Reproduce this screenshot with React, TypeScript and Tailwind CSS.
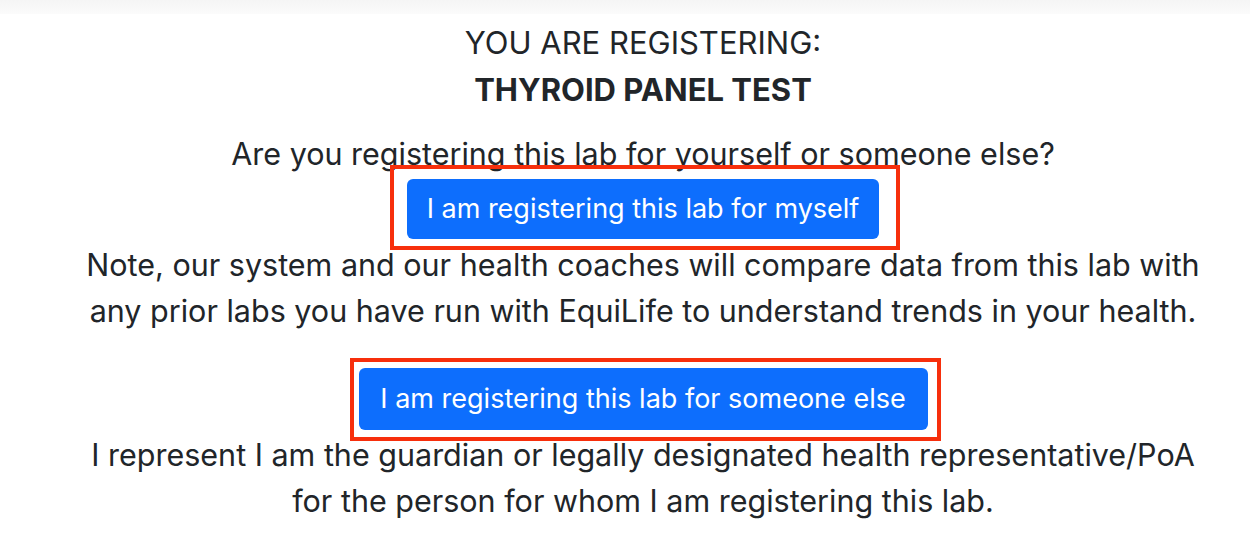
import React from "react";

export default function App() {
  return (
    <div
      className="min-h-[556px] w-full bg-white text-[#212529]"
      style={{ fontFamily: "Inter, 'Noto Sans', sans-serif" }}
    >
      <div className="h-[14px] w-full bg-gradient-to-b from-[#f5f5f5] to-[#fbfbfb]" />
      <div className="flex flex-col items-center pl-[36px] text-center">
        <div className="mt-[5px] text-[31px] leading-[47px]">YOU ARE REGISTERING:</div>
        <div className="text-[31px] font-bold leading-[47px]">THYROID PANEL TEST</div>
        <p className="mt-[17.5px] text-[30.5px] leading-[46.5px]">
          Are you registering this lab for yourself or someone else?
        </p>
        <div className="relative mt-[2px]">
          <div className="pointer-events-none absolute left-[-17px] right-[-21px] top-[-14px] bottom-[-11px] border-[4px] border-[#f72f0c]" />
          <button className="relative h-[60px] w-[472px] rounded-[6px] bg-[#0d6efd] text-[27px] text-white">
            I am registering this lab for myself
          </button>
        </div>
        <p className="mt-[2.5px] text-[30.5px] leading-[46.5px]">
          Note, our system and our health coaches will compare data from this lab with
          <br />
          any prior labs you have run with EquiLife to understand trends in your health.
        </p>
        <div className="relative mt-[33.5px]">
          <div className="pointer-events-none absolute left-[-9px] right-[-13px] top-[-10px] bottom-[-11px] border-[4px] border-[#f72f0c]" />
          <button className="relative h-[62px] w-[569px] rounded-[6px] bg-[#0d6efd] text-[27px] text-white">
            I am registering this lab for someone else
          </button>
        </div>
        <p className="mt-[1.5px] text-[30.5px] leading-[46.5px]">
          I represent I am the guardian or legally designated health representative/PoA
          <br />
          for the person for whom I am registering this lab.
        </p>
      </div>
    </div>
  );
}
